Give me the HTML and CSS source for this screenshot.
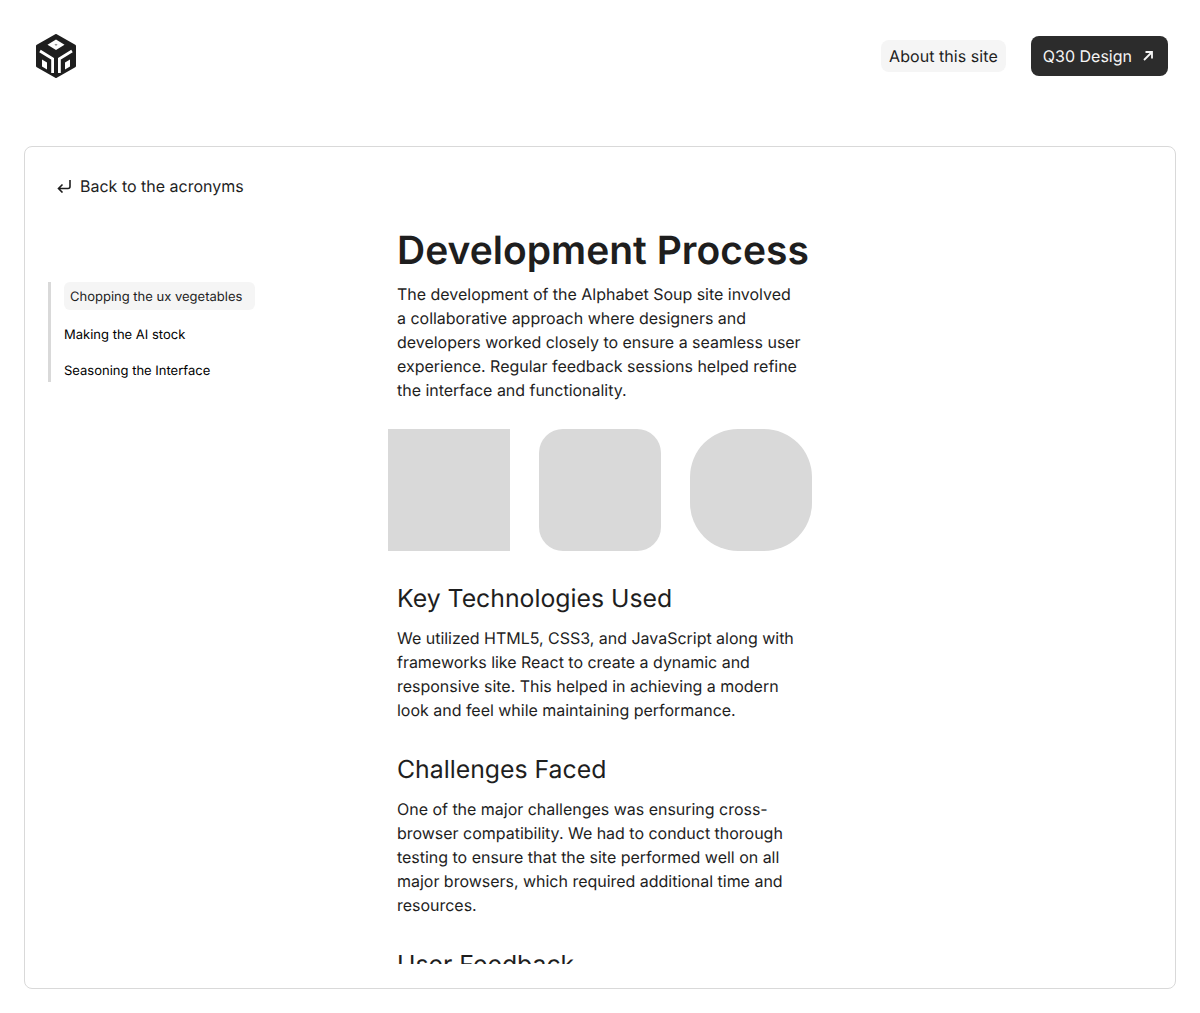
FILE: index.html
```html
<!DOCTYPE html>
<html lang="en">
<head>
    <meta charset="UTF-8">
    <meta name="viewport" content="width=device-width, initial-scale=1.0">
    <title>Development Process</title>
    <link rel="stylesheet" href="styles.css">
</head>
<body>
    <header class="site-header">
        <a href="#" class="logo" aria-label="Home">
            <svg width="42" height="44" viewBox="0 0 42 44">
                <path d="M21 1.500 39.500 12V32L21 42.500 2.500 32V12Z" fill="#1e1e1e" stroke="#1e1e1e" stroke-width="3" stroke-linejoin="round"/>
                <path d="M21 5.500 29.500 10.800 21 16 12.500 10.800Z" fill="#ffffff"/>
                <path d="M21 9.800 22.600 10.800 21 11.800 19.400 10.800Z" fill="#8a8a8a"/>
                <g fill="none" stroke="#ffffff" stroke-width="2.800">
                    <path d="M5 17 17.600 24.800V39"/>
                    <path d="M37 17 24.400 24.800V39"/>
                </g>
                <path d="M7 25.500 12 28.500V35.500L7 32.500Z" fill="#ffffff"/>
                <path d="M35 25.500 30 28.500V35.500L35 32.500Z" fill="#ffffff"/>
            </svg>
        </a>
        <nav class="header-nav">
            <a href="#" class="about-link">About this site</a>
            <a href="#" class="design-link">Q30 Design
                <svg width="12" height="12" viewBox="0 0 12 12" fill="none" stroke="#f5f5f5" stroke-width="1.8">
                    <path d="M2 10 10 2M3.500 2H10V8.500"/>
                </svg>
            </a>
        </nav>
    </header>

    <main class="card">
        <a href="#" class="back-link">
            <svg width="15" height="14" viewBox="0 0 15 14" fill="none" stroke="#1e1e1e" stroke-width="1.6">
                <path d="M13 1V7.500A2 2 0 0 1 11 9.500H1.500M5.500 5.500 1.500 9.500 5.500 13.500"/>
            </svg>
            Back to the acronyms
        </a>
        <div class="card-body">
            <aside class="toc">
                <a href="#" class="toc-item active">Chopping the ux vegetables</a>
                <a href="#" class="toc-item">Making the AI stock</a>
                <a href="#" class="toc-item">Seasoning the Interface</a>
            </aside>
            <article class="content">
                <h1>Development Process</h1>
                <p>The development of the Alphabet Soup site involved a collaborative approach where designers and developers worked closely to ensure a seamless user experience. Regular feedback sessions helped refine the interface and functionality.</p>
                <div class="shapes">
                    <div class="shape square"></div>
                    <div class="shape rounded"></div>
                    <div class="shape rounder"></div>
                </div>
                <h2>Key Technologies Used</h2>
                <p>We utilized HTML5, CSS3, and JavaScript along with frameworks like React to create a dynamic and responsive site. This helped in achieving a modern look and feel while maintaining performance.</p>
                <h2>Challenges Faced</h2>
                <p>One of the major challenges was ensuring cross-browser compatibility. We had to conduct thorough testing to ensure that the site performed well on all major browsers, which required additional time and resources.</p>
                <h2>User Feedback</h2>
                <p>Feedback from early users shaped many of the decisions made during the final stages of the project.</p>
            </article>
        </div>
    </main>
</body>
</html>
```

FILE: styles.css
```css
* {
    box-sizing: border-box;
}
html, body {
    height: 100%;
}
body {
    font-family: 'Inter', sans-serif;
    text-rendering: geometricPrecision;
    background-color: #ffffff;
    color: #1e1e1e;
    margin: 0;
    padding: 0 24px 24px;
    display: flex;
    flex-direction: column;
    overflow: hidden;
}
a {
    color: inherit;
    text-decoration: none;
}
.site-header {
    height: 146px;
    flex-shrink: 0;
    padding: 34px 8px 68px 11px;
    display: flex;
    justify-content: space-between;
    align-items: center;
}
.logo {
    display: flex;
}
.header-nav {
    display: flex;
    align-items: center;
    gap: 25px;
    font-size: 16px;
}
.about-link {
    background-color: #f5f5f5;
    border-radius: 8px;
    padding: 4px 8px;
    line-height: 24px;
    letter-spacing: 0.06px;
}
.design-link {
    display: flex;
    align-items: center;
    gap: 10px;
    background-color: #2c2c2c;
    color: #f5f5f5;
    border-radius: 8px;
    padding: 8px 14px 8px 12px;
    line-height: 24px;
}
.card {
    flex: 1;
    min-height: 0;
    border: 1px solid #d9d9d9;
    border-radius: 8px;
    padding: 24px 0 24px;
    display: flex;
    flex-direction: column;
}
.back-link {
    display: flex;
    align-items: center;
    gap: 8px;
    margin-left: 32px;
    font-size: 16px;
    line-height: 30px;
}
.card-body {
    flex: 1;
    min-height: 0;
    position: relative;
    overflow: hidden;
    margin-top: 15px;
}
.toc {
    position: absolute;
    left: 23px;
    top: 66px;
    width: 210px;
    border-left: 3px solid #d9d9d9;
    padding-left: 13px;
    font-size: 13px;
    line-height: 16px;
    display: flex;
    flex-direction: column;
    align-items: flex-start;
}
.toc-item {
    padding: 7px 0 5px;
    margin-bottom: 8px;
    color: #000000;
}
.toc-item:last-child {
    margin-bottom: 0;
    padding-bottom: 3px;
}
.toc-item.active {
    background-color: #f5f5f5;
    border-radius: 6px;
    padding: 7px 13px 5px 6px;
    margin-bottom: 10px;
    color: #1e1e1e;
}
.content {
    width: 406px;
    margin: 0 auto;
    padding-top: 11px;
}
h1 {
    font-size: 39px;
    line-height: 48px;
    font-weight: 600;
    margin: 0 -20px 7px 0;
    white-space: nowrap;
}
h2 {
    font-size: 24.8px;
    line-height: 32px;
    font-weight: 400;
    margin: 31px 0 12px;
}
p {
    font-size: 16px;
    line-height: 24px;
    margin: 0;
    letter-spacing: -0.02px;
}
.shapes {
    display: flex;
    justify-content: space-between;
    margin: 27px -9px 0;
}
.shape {
    width: 122px;
    height: 122px;
    background-color: #d9d9d9;
}
.rounded {
    border-radius: 24px;
}
.rounder {
    border-radius: 48px;
}
```
